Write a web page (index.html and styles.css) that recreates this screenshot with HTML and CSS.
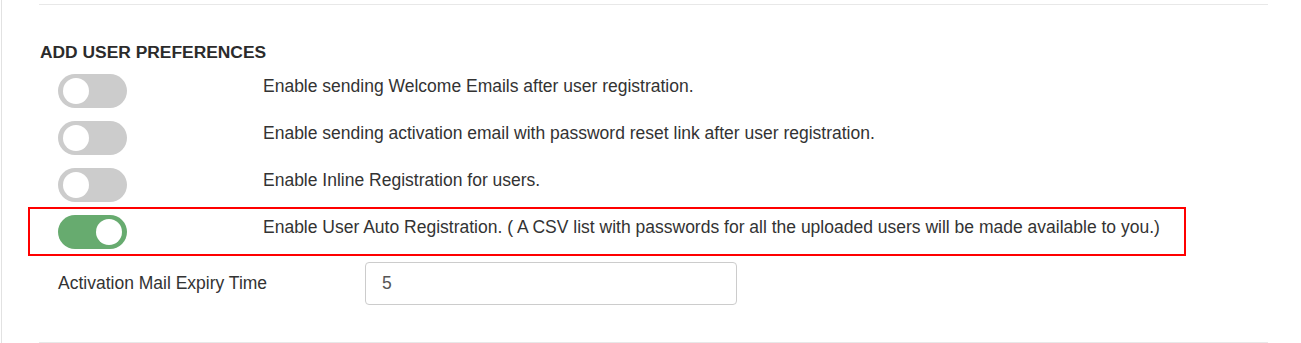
FILE: index.html
```html
<!DOCTYPE html>
<html lang="en">
<head>
    <meta charset="UTF-8">
    <meta name="viewport" content="width=device-width, initial-scale=1.0">
    <title>User Preferences</title>
    <link rel="stylesheet" href="styles.css">
</head>
<body>
    <div class="panel">
        <hr class="divider">
        <h3 class="section-title">Add User Preferences</h3>

        <div class="pref-list">
            <div class="pref-row">
                <div class="pref-row__switch"><span class="switch"></span></div>
                <div class="pref-row__text">Enable sending Welcome Emails after user registration.</div>
            </div>
            <div class="pref-row">
                <div class="pref-row__switch"><span class="switch"></span></div>
                <div class="pref-row__text">Enable sending activation email with password reset link after user registration.</div>
            </div>
            <div class="pref-row">
                <div class="pref-row__switch"><span class="switch"></span></div>
                <div class="pref-row__text">Enable Inline Registration for users.</div>
            </div>
            <div class="pref-row pref-row--marked">
                <div class="pref-row__switch"><span class="switch switch--on"></span></div>
                <div class="pref-row__text">Enable User Auto Registration. ( A CSV list with passwords for all the uploaded users will be made available to you.)</div>
            </div>

            <div class="field-row">
                <label class="field-row__label" for="expiry">Activation Mail Expiry Time</label>
                <input class="field-row__input" id="expiry" type="text" value="5">
            </div>
        </div>

        <hr class="divider divider--bottom">
    </div>
</body>
</html>
```

FILE: styles.css
```css
* {
   padding: 0;
   margin: 0;
   box-sizing: border-box;
}

body {
   font-family: "Liberation Sans", Arial, sans-serif;
   font-size: 17.5px;
   color: #333333;
   background-color: #ffffff;
}

.panel {
   margin-left: 1px;
   height: 343px;
   border-left: 1px solid #e2e2e2;
   padding: 4px 33px 0 37px;
}

.divider {
   border: none;
   border-top: 1px solid #e8e8e8;
}

.divider--bottom {
   margin-top: 37px;
}

.section-title {
   margin-top: 37px;
   padding-left: 1px;
   font-size: 17.4px;
   line-height: 20px;
   font-weight: bold;
   text-transform: uppercase;
   color: #2b2b2b;
}

.pref-list {
   display: flex;
   flex-direction: column;
   margin-top: 12px;
}

.pref-row {
   display: flex;
   align-items: flex-start;
   padding-left: 19px;
   margin-bottom: 13px;
}

.pref-row__switch {
   width: 205px;
   flex-shrink: 0;
}

.pref-row__text {
   padding-top: 1px;
   line-height: 22px;
}

/* highlighted row */
.pref-row--marked {
   margin: -8px 82px 6px -11px;
   padding: 6px 0 5px 28px;
   border: 2px solid #ff0000;
}

.switch {
   display: block;
   position: relative;
   width: 69px;
   height: 34px;
   border-radius: 17px;
   background-color: #cccccc;
}

.switch::after {
   content: "";
   position: absolute;
   top: 4px;
   left: 5px;
   width: 26px;
   height: 26px;
   border-radius: 50%;
   background-color: #ffffff;
}

.switch--on {
   background-color: #67ab6f;
}

.switch--on::after {
   left: 38px;
}

.field-row {
   display: flex;
   align-items: center;
   padding-left: 19px;
}

.field-row__label {
   width: 307px;
   flex-shrink: 0;
}

.field-row__input {
   width: 372px;
   height: 43px;
   padding: 0 16px;
   font-family: "Liberation Sans", Arial, sans-serif;
   font-size: 17.5px;
   color: #555555;
   border: 1px solid #cccccc;
   border-radius: 4px;
   outline: none;
}
```
